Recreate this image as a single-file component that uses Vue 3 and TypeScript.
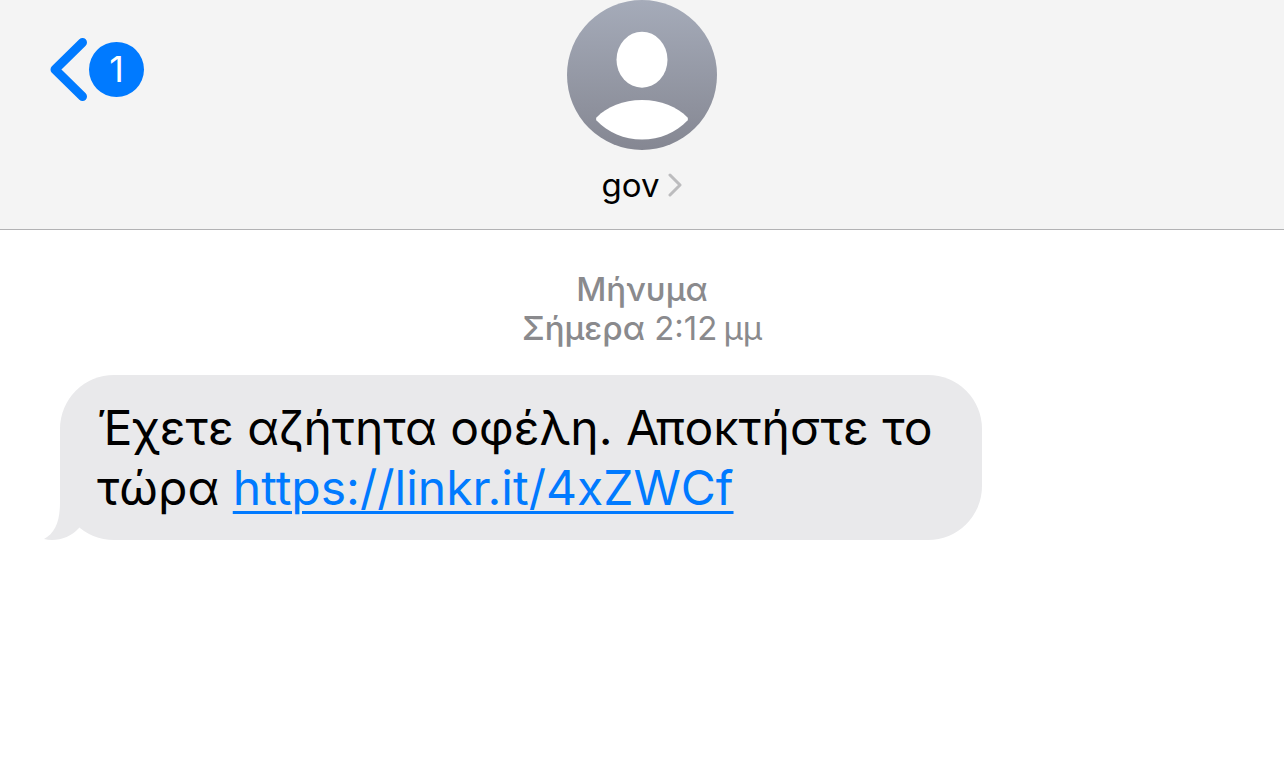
<script setup lang="ts">
interface Message {
  text: string
  link: string
}

const contact = 'gov'
const unread = 1
const service = 'Μήνυμα'
const day = 'Σήμερα'
const time = '2:12\u202fμμ'
const messages: Message[] = [
  { text: 'Έχετε αζήτητα οφέλη. Αποκτήστε το τώρα', link: 'https://linkr.it/4xZWCf' },
]
</script>

<template>
  <div class="screen">
    <header class="bar">
      <button class="back" type="button" aria-label="Πίσω">
        <svg class="back-arrow" viewBox="0 0 39 64" aria-hidden="true">
          <path d="M32.500 5.500 L5 32.500 L32.500 59.500" />
        </svg>
        <span class="badge">{{ unread }}</span>
      </button>
      <button class="contact" type="button">
        <svg class="avatar" viewBox="0 0 150 150" aria-hidden="true">
          <defs>
            <linearGradient id="avatar-fill" x1="0" y1="0" x2="0" y2="1">
              <stop offset="0" stop-color="#a5abb9" />
              <stop offset="1" stop-color="#858792" />
            </linearGradient>
          </defs>
          <circle cx="75" cy="75" r="75" fill="url(#avatar-fill)" />
          <ellipse cx="75" cy="59.700" rx="25.500" ry="28" fill="#fff" />
          <path
            d="M29.500 117.500 C40 106.500 56 100 75 100 C94 100 110 106.500 120.500 117.500 Q121.500 119 120.500 120.500 C109 132.500 93 139.500 75 139.500 C57 139.500 41 132.500 29.500 120.500 Q28.500 119 29.500 117.500 Z"
            fill="#fff"
          />
        </svg>
        <span class="name">
          {{ contact }}
          <svg class="chevron" viewBox="0 0 14 24" aria-hidden="true">
            <path d="M2 2 L12 12 L2 22" />
          </svg>
        </span>
      </button>
    </header>
    <main class="thread">
      <p class="stamp">
        <span class="strong">{{ service }}</span><br />
        <span class="strong">{{ day }}</span> {{ time }}
      </p>
      <div v-for="message in messages" :key="message.link" class="bubble">
        <svg class="tail" viewBox="0 0 40 60" aria-hidden="true">
          <path d="M16 0 V22 C16 42 11 53 0 59 C12 62 26 58 35 48 L40 40 V0 Z" />
        </svg>
        <p class="text">{{ message.text }} <a :href="message.link">{{ message.link }}</a></p>
      </div>
    </main>
  </div>
</template>

<style>
body {
  background: #fff;
}
</style>

<style scoped>
.screen {
  min-height: 100vh;
  background: #fff;
  color: #000;
  font-family: Inter, "Liberation Sans", sans-serif;
}

.bar {
  display: grid;
  grid-template-columns: 1fr auto 1fr;
  align-items: start;
  padding: 0 50px 24px;
  border-bottom: 1px solid #b2b2b4;
  background: #f4f4f4;
}

button {
  margin: 0;
  padding: 0;
  border: 0;
  background: none;
  color: inherit;
  font: inherit;
  cursor: pointer;
}

.back {
  display: flex;
  align-items: center;
  justify-self: start;
  margin-top: 37px;
}

.back-arrow {
  width: 39px;
  height: 64px;
  fill: none;
  stroke: #007aff;
  stroke-width: 9;
  stroke-linecap: round;
  stroke-linejoin: round;
}

.badge {
  display: flex;
  align-items: center;
  justify-content: center;
  width: 55px;
  height: 55px;
  border-radius: 50%;
  background: #007aff;
  color: #fff;
  font-size: 36px;
}

.contact {
  display: flex;
  flex-direction: column;
  align-items: center;
  gap: 15px;
}

.avatar {
  display: block;
  width: 150px;
  height: 150px;
}

.name {
  display: flex;
  align-items: center;
  gap: 9px;
  font-size: 33px;
  line-height: 40px;
}

.chevron {
  width: 14px;
  height: 24px;
  fill: none;
  stroke: #bcbcbe;
  stroke-width: 3;
  stroke-linecap: round;
  stroke-linejoin: round;
}

.thread {
  padding: 40px 60px;
}

.stamp {
  margin: 0 0 27px;
  color: #8a8a8d;
  font-size: 33px;
  line-height: 39px;
  text-align: center;
}

.strong {
  font-weight: 500;
}

.bubble {
  position: relative;
  box-sizing: border-box;
  width: fit-content;
  max-width: 922px;
  padding: 23px 37px 22px;
  border-radius: 54px;
  background: #e9e9eb;
}

.tail {
  position: absolute;
  left: -16px;
  bottom: 0;
  width: 40px;
  height: 60px;
  fill: #e9e9eb;
}

.text {
  position: relative;
  margin: 0;
  font-size: 48px;
  line-height: 60px;
}

.text a {
  color: #007aff;
  text-decoration-thickness: 3px;
  text-underline-offset: 6px;
}
</style>
